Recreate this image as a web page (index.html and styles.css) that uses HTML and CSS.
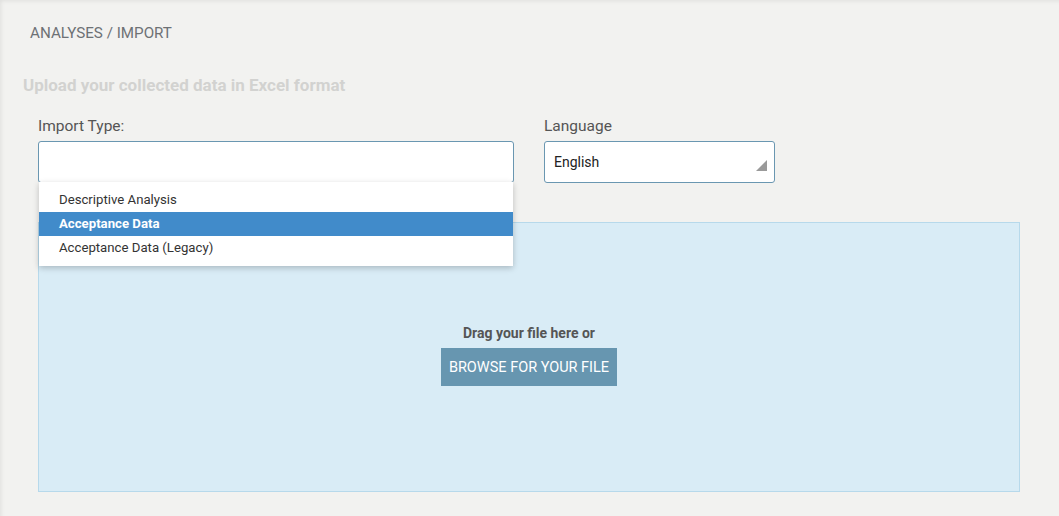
FILE: index.html
```html
<!DOCTYPE html>
<html>
<head>
<meta charset="utf-8">
<link rel="stylesheet" href="styles.css">
</head>
<body>
<div class="page">
  <div class="breadcrumb">ANALYSES / IMPORT</div>
  <h2 class="subtitle">Upload your collected data in Excel format</h2>
  <div class="fields">
    <div class="field type-field">
      <label class="label">Import Type:</label>
      <div class="select-wrap">
        <div class="select select-type"></div>
        <ul class="menu">
          <li class="option">Descriptive Analysis</li>
          <li class="option active">Acceptance Data</li>
          <li class="option">Acceptance Data (Legacy)</li>
        </ul>
      </div>
    </div>
    <div class="field lang-field">
      <label class="label">Language</label>
      <div class="select select-lang">
        <span>English</span>
        <span class="corner"></span>
      </div>
    </div>
  </div>
  <div class="dropzone">
    <div class="drag-text">Drag your file here or</div>
    <button class="browse">BROWSE FOR YOUR FILE</button>
  </div>
</div>
</body>
</html>
```
FILE: styles.css
```css
html, body {
  margin: 0;
  padding: 0;
  height: 100%;
}
body {
  background: #f2f2f0;
  font-family: Roboto, "Liberation Sans", sans-serif;
  box-shadow: inset 3px 3px 4px -2px rgba(0,0,0,0.08);
  overflow: hidden;
}
.page {
  padding: 25px 39px 0 23px;
}
.breadcrumb {
  margin-left: 7px;
  font-size: 15.2px;
  color: #6d7175;
  line-height: 17px;
}
.subtitle {
  margin: 34px 0 0 0;
  font-size: 17px;
  font-weight: 700;
  color: #d2d2d0;
  line-height: 19px;
}
.fields {
  display: flex;
  margin: 22px 0 0 15px;
  gap: 30px;
}
.field {
  display: flex;
  flex-direction: column;
}
.label {
  font-size: 15.5px;
  color: #555;
  line-height: 18px;
  margin-bottom: 6px;
}
.type-field {
  width: 476px;
}
.lang-field {
  width: 231px;
}
.select-wrap {
  position: relative;
}
.select {
  box-sizing: border-box;
  height: 42px;
  background: #fff;
  border: 1px solid #6a97b1;
  border-radius: 3px;
}
.select-lang {
  position: relative;
  display: flex;
  align-items: center;
  padding-left: 9px;
  font-size: 14px;
  color: #222;
}
.corner {
  position: absolute;
  right: 7px;
  bottom: 11px;
  width: 0;
  height: 0;
  border-left: 11px solid transparent;
  border-bottom: 11px solid #9a9a9a;
}
.menu {
  position: absolute;
  left: 1px;
  right: 1px;
  top: 41px;
  margin: 0;
  padding: 6px 0;
  list-style: none;
  background: #fff;
  box-shadow: 0 2px 6px rgba(0,0,0,0.22);
  z-index: 2;
}
.option {
  height: 24px;
  line-height: 24px;
  padding-left: 20px;
  font-size: 13.2px;
  color: #333;
}
.option.active {
  background: #418bca;
  color: #fff;
  font-weight: 700;
}
.dropzone {
  box-sizing: border-box;
  margin: 39px 0 0 15px;
  height: 270px;
  background: #d9ecf6;
  border: 1px solid #b7d9eb;
  display: flex;
  flex-direction: column;
  align-items: center;
  padding-top: 102px;
}
.drag-text {
  font-size: 14px;
  font-weight: 700;
  color: #555;
  line-height: 16px;
}
.browse {
  margin-top: 7px;
  width: 176px;
  height: 38px;
  border: none;
  background: #6796b0;
  color: #fff;
  font-family: Roboto, "Liberation Sans", sans-serif;
  font-size: 14.5px;
  padding: 0;
}
```
